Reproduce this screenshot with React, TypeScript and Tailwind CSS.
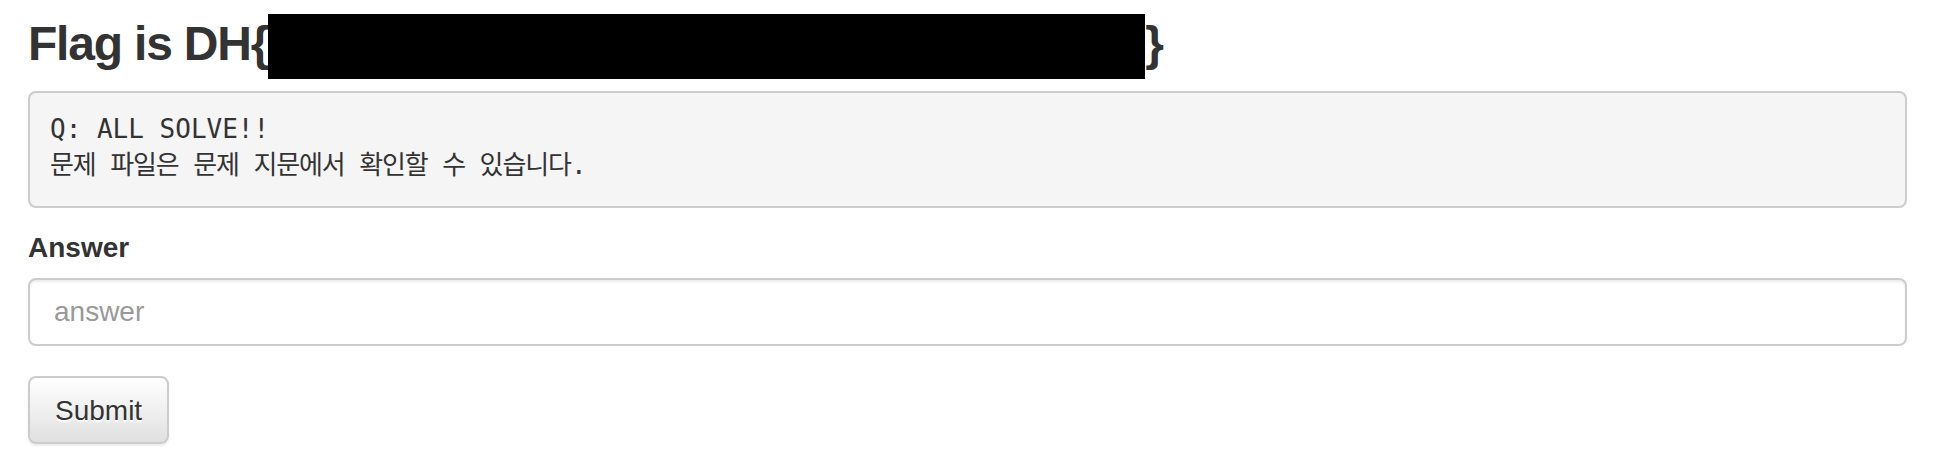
import React from "react";

const sans = "font-['Liberation_Sans',Arial,sans-serif]";

export default function App() {
  return (
    <div className={`${sans} text-[28px] leading-[40px] text-[#333] bg-white min-h-[470px] pl-[28px] pr-[47px] pt-[18px]`}>
      {/* Title with redacted flag */}
      <h3 className="text-[48px] leading-[52.8px] font-bold tracking-[-1.2px] mb-[20px] whitespace-nowrap">
        Flag is DH{"{"}
        <span className="relative inline-block align-top w-[877px] h-[52.8px]">
          <span className="absolute left-0 right-0 top-[-4px] bottom-[-8px] bg-black" />
        </span>
        {"}"}
      </h3>

      {/* Problem description */}
      <pre className="font-['DejaVu_Sans_Mono','Noto_Sans_CJK_KR',monospace] text-[26px] leading-[36px] bg-[#f5f5f5] border-2 border-[#ccc] rounded-[8px] pl-[20px] pr-[20px] pt-[18px] pb-[23px] mb-[20px] whitespace-pre-wrap">
        <div>Q: ALL SOLVE!!</div>
        <div className="tracking-[-1.1px]">문제 파일은 문제 지문에서 확인할 수 있습니다.</div>
      </pre>

      {/* Answer form */}
      <form onSubmit={(e) => e.preventDefault()}>
        <div className="mb-[30px]">
          <label className="block font-bold mb-[10px]">Answer</label>
          <input
            type="text"
            placeholder="answer"
            className="block w-full h-[68px] px-[24px] py-[12px] text-[28px] border-2 border-[#ccc] rounded-[8px] bg-white shadow-[inset_0_2px_2px_rgba(0,0,0,0.075)] placeholder:text-[#999] outline-none"
          />
        </div>
        <button
          type="submit"
          className="h-[68px] px-[25px] pt-[2px] text-[28px] text-[#333] border-2 border-[#ccc] rounded-[8px] bg-gradient-to-b from-white to-[#e0e0e0] shadow-[0_2px_2px_rgba(0,0,0,0.075)] [text-shadow:0_2px_0_#fff]"
        >
          Submit
        </button>
      </form>
    </div>
  );
}
